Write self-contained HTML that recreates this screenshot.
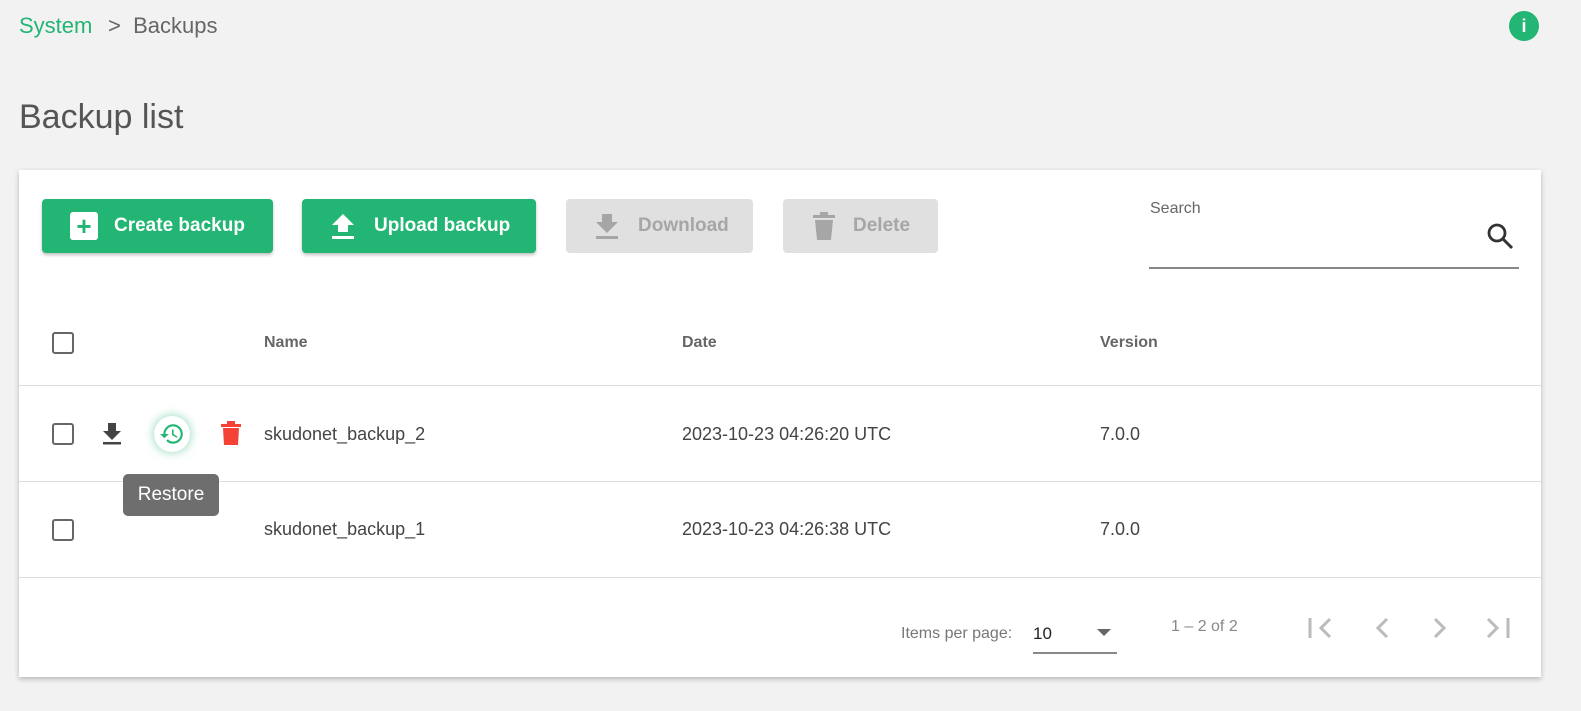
<!DOCTYPE html>
<html><head><meta charset="utf-8"><style>
*{box-sizing:border-box;margin:0;padding:0}
body{width:1581px;height:711px;background:#f2f2f2;font-family:"Liberation Sans",Roboto,sans-serif;position:relative;overflow:hidden;color:#333}
.a{position:absolute}
.btn{position:absolute;top:199px;height:54px;border-radius:4px;color:#fff;font-weight:bold;font-size:19px;display:flex;align-items:center;box-shadow:0 2px 3px rgba(0,0,0,.25)}
.g{background:#22b573}
.d{background:#e0e0e0;color:#a6a6a6;box-shadow:none}
.cb{position:absolute;width:22px;height:22px;border:2.5px solid #666;border-radius:3px}
.th{position:absolute;top:334px;font-size:16px;font-weight:bold;color:#666}
.td{position:absolute;font-size:18px;color:#444}
.hr{position:absolute;left:19px;width:1522px;height:1px;background:#ddd}
</style></head><body>
<div class="a" style="left:19px;top:13px;font-size:22px;color:#22b573">System</div>
<div class="a" style="left:108px;top:13px;font-size:22px;color:#666">&gt;&nbsp; Backups</div>
<div class="a" style="left:1509px;top:11px;width:30px;height:30px;border-radius:50%;background:#22b573;color:#fff;font-weight:bold;font-size:18px;text-align:center;line-height:30px">i</div>
<div class="a" style="left:19px;top:98px;font-size:34px;color:#555">Backup list</div>
<div class="a" style="left:19px;top:170px;width:1522px;height:507px;background:#fff;box-shadow:0 2px 5px rgba(0,0,0,.25)"></div>
<div class="btn g" style="left:42px;width:231px"><span style="margin-left:28px;width:28px;height:28px;background:#fff;border-radius:3px;color:#22b573;font-size:26px;line-height:28px;text-align:center;margin-right:16px">+</span>Create backup</div>
<div class="btn g" style="left:302px;width:234px"><svg style="margin-left:28px;margin-right:18px" width="26" height="28" viewBox="0 0 26 28"><path d="M13 2 L24 13 H18 V20 H8 V13 H2Z" fill="#fff"/><rect x="2" y="24" width="22" height="3" fill="#fff"/></svg>Upload backup</div>
<div class="btn d" style="left:566px;width:187px"><svg style="margin-left:28px;margin-right:18px" width="26" height="28" viewBox="0 0 26 28"><path d="M8 2 H18 V10 H24 L13 21 L2 10 H8Z" fill="#a6a6a6"/><rect x="2" y="24" width="22" height="3" fill="#a6a6a6"/></svg>Download</div>
<div class="btn d" style="left:783px;width:155px"><svg style="margin-left:30px;margin-right:18px" width="22" height="28" viewBox="0 0 22 28"><rect x="0" y="3" width="22" height="3" fill="#a6a6a6"/><rect x="7" y="0" width="8" height="4" fill="#a6a6a6"/><path d="M2 8 H20 L18 28 H4Z" fill="#a6a6a6"/></svg>Delete</div>
<div class="a" style="left:1150px;top:200px;font-size:16px;color:#666">Search</div>
<svg class="a" style="left:1486px;top:222px" width="28" height="28" viewBox="0 0 28 28"><circle cx="11" cy="11" r="8" stroke="#333" stroke-width="2.8" fill="none"/><path d="M17 17 L26 26" stroke="#333" stroke-width="3"/></svg>
<div class="a" style="left:1149px;top:267px;width:370px;height:2px;background:#888"></div>
<div class="cb" style="left:52px;top:332px"></div>
<div class="th" style="left:264px">Name</div><div class="th" style="left:682px">Date</div><div class="th" style="left:1100px">Version</div>
<div class="hr" style="top:385px"></div>
<div class="cb" style="left:52px;top:423px"></div>
<svg class="a" style="left:102px;top:422px" width="20" height="24" viewBox="0 0 20 24"><path d="M6 1 H14 V9 H19 L10 18 L1 9 H6Z" fill="#444"/><rect x="1" y="20" width="18" height="2.5" fill="#444"/></svg>
<div class="a" style="left:154px;top:416px;width:36px;height:36px;border-radius:50%;background:#fff;box-shadow:0 0 10px rgba(34,181,115,.55)"></div>
<svg class="a" style="left:159px;top:421px" width="26" height="26" viewBox="0 0 24 24"><path d="M13 3a9 9 0 0 0-9 9H1l3.9 3.9L9 12H6c0-3.9 3.1-7 7-7s7 3.1 7 7-3.1 7-7 7c-1.9 0-3.7-.8-4.9-2.1l-1.4 1.4C8.3 20 10.5 21 13 21a9 9 0 0 0 0-18zm-1 5v5l4.3 2.5.7-1.2-3.5-2.1V8z" fill="#22b573"/></svg>
<svg class="a" style="left:221px;top:421px" width="20" height="24" viewBox="0 0 20 24"><rect x="0" y="3" width="20" height="3" fill="#f44336"/><rect x="6" y="0" width="8" height="4" fill="#f44336"/><path d="M2 7 H18 L17 24 H3Z" fill="#f44336"/></svg>
<div class="td" style="left:264px;top:424px">skudonet_backup_2</div>
<div class="td" style="left:682px;top:424px">2023-10-23 04:26:20 UTC</div>
<div class="td" style="left:1100px;top:424px">7.0.0</div>
<div class="hr" style="top:481px"></div>
<div class="cb" style="left:52px;top:519px"></div>
<div class="td" style="left:264px;top:519px">skudonet_backup_1</div>
<div class="td" style="left:682px;top:519px">2023-10-23 04:26:38 UTC</div>
<div class="td" style="left:1100px;top:519px">7.0.0</div>
<div class="a" style="left:123px;top:474px;width:96px;height:42px;background:#6e6e6e;border-radius:5px;color:#fff;font-size:19px;text-align:center;line-height:42px">Restore</div>
<div class="hr" style="top:577px"></div>
<div class="a" style="left:901px;top:625px;font-size:16px;color:#777">Items per page:</div>
<div class="a" style="left:1033px;top:624px;font-size:17px;color:#222">10</div>
<svg class="a" style="left:1097px;top:629px" width="14" height="8"><path d="M0 0 H14 L7 7Z" fill="#666"/></svg>
<div class="a" style="left:1033px;top:652px;width:84px;height:1.5px;background:#888"></div>
<div class="a" style="left:1171px;top:618px;font-size:16px;color:#888">1 – 2 of 2</div>
<svg class="a" style="left:1305px;top:614px" width="210" height="28" viewBox="0 0 210 28" fill="none" stroke="#bbb" stroke-width="3"><path d="M5 4 V24"/><path d="M25 5 L16 14 L25 23"/><path d="M82 5 L73 14 L82 23"/><path d="M130 5 L139 14 L130 23"/><path d="M183 5 L192 14 L183 23"/><path d="M203 4 V24"/></svg>
</body></html>
